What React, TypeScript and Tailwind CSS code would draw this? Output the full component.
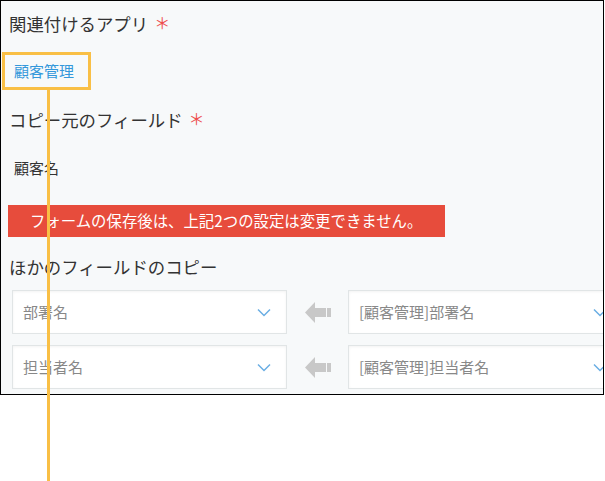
import React from "react";

const FONT = { fontFamily: '"Noto Sans CJK JP", "Noto Sans", sans-serif' };

/* ---------- Icons ---------- */
const Chevron = () => (
  <svg width="14" height="9" viewBox="0 0 14 9" className="shrink-0">
    <path d="M1 1.5 L7 7.5 L13 1.5" fill="none" stroke="#6aaee3" strokeWidth="1.5" />
  </svg>
);

const CopyArrow = () => (
  <svg width="26" height="21" viewBox="0 0 26 21" className="shrink-0">
    <polygon points="0,10.5 10,0 10,21" fill="#c8c8c8" />
    <rect x="10" y="6" width="11" height="9" fill="#c8c8c8" />
    <rect x="22" y="6" width="4" height="9" fill="#c8c8c8" />
  </svg>
);

/* ---------- Pieces ---------- */
const Label = ({ text, required }: { text: string; required?: boolean }) => (
  <div className="flex items-center text-[17.4px] text-[#333]">
    <span>{text}</span>
    {required && (
      <span className="ml-[6px] -translate-y-[2px] text-[16px] leading-none text-[#ee4d4d]">＊</span>
    )}
  </div>
);

const Select = ({ value }: { value: string }) => (
  <div className="flex h-[44px] w-[275px] shrink-0 items-center justify-between border border-[#e1e5e6] bg-white pl-[10px] pr-[15px] shadow-[inset_0_1px_3px_rgba(0,0,0,0.05)]">
    <span className="text-[15px] text-[#888]">{value}</span>
    <Chevron />
  </div>
);

const CopyRow = ({ from, to }: { from: string; to: string }) => (
  <div className="flex items-center pl-[4px]">
    <Select value={from} />
    <div className="flex w-[61px] shrink-0 justify-center">
      <CopyArrow />
    </div>
    <Select value={to} />
  </div>
);

/* ---------- Main Component ---------- */
export default function App() {
  return (
    <div className="relative h-[481px] w-[605px] bg-white" style={FONT}>
      <div className="h-[395px] w-[604px] overflow-hidden border border-black bg-[#f7f9fa] pl-[7px]">
        <div className="flex h-[46px] items-center pl-px">
          <Label text="関連付けるアプリ" required />
        </div>
        <div className="flex h-[48px] items-center pl-[6px] text-[15px] text-[#3498db]">顧客管理</div>
        <div className="flex h-[50px] items-center pl-px">
          <Label text="コピー元のフィールド" required />
        </div>
        <div className="flex h-[46px] items-center pl-[6px] text-[15px] text-[#333]">顧客名</div>

        <div className="mt-[14px] flex h-[32px] w-[437px] items-center bg-[#e74c3c] pl-[22px] text-[15.4px] text-white">
          フォームの保存後は、上記2つの設定は変更できません。
        </div>

        <div className="flex h-[53px] items-center pl-px pt-[7px]">
          <Label text="ほかのフィールドのコピー" />
        </div>

        <div className="flex flex-col gap-[11px]">
          <CopyRow from="部署名" to="[顧客管理]部署名" />
          <CopyRow from="担当者名" to="[顧客管理]担当者名" />
        </div>
      </div>

      {/* annotation */}
      <div className="absolute left-[2px] top-[52px] h-[38px] w-[89px] border-[3px] border-[#f9bf45]" />
      <div className="absolute left-[47px] top-[90px] h-[391px] w-[3px] bg-[#f9bf45]" />
    </div>
  );
}
